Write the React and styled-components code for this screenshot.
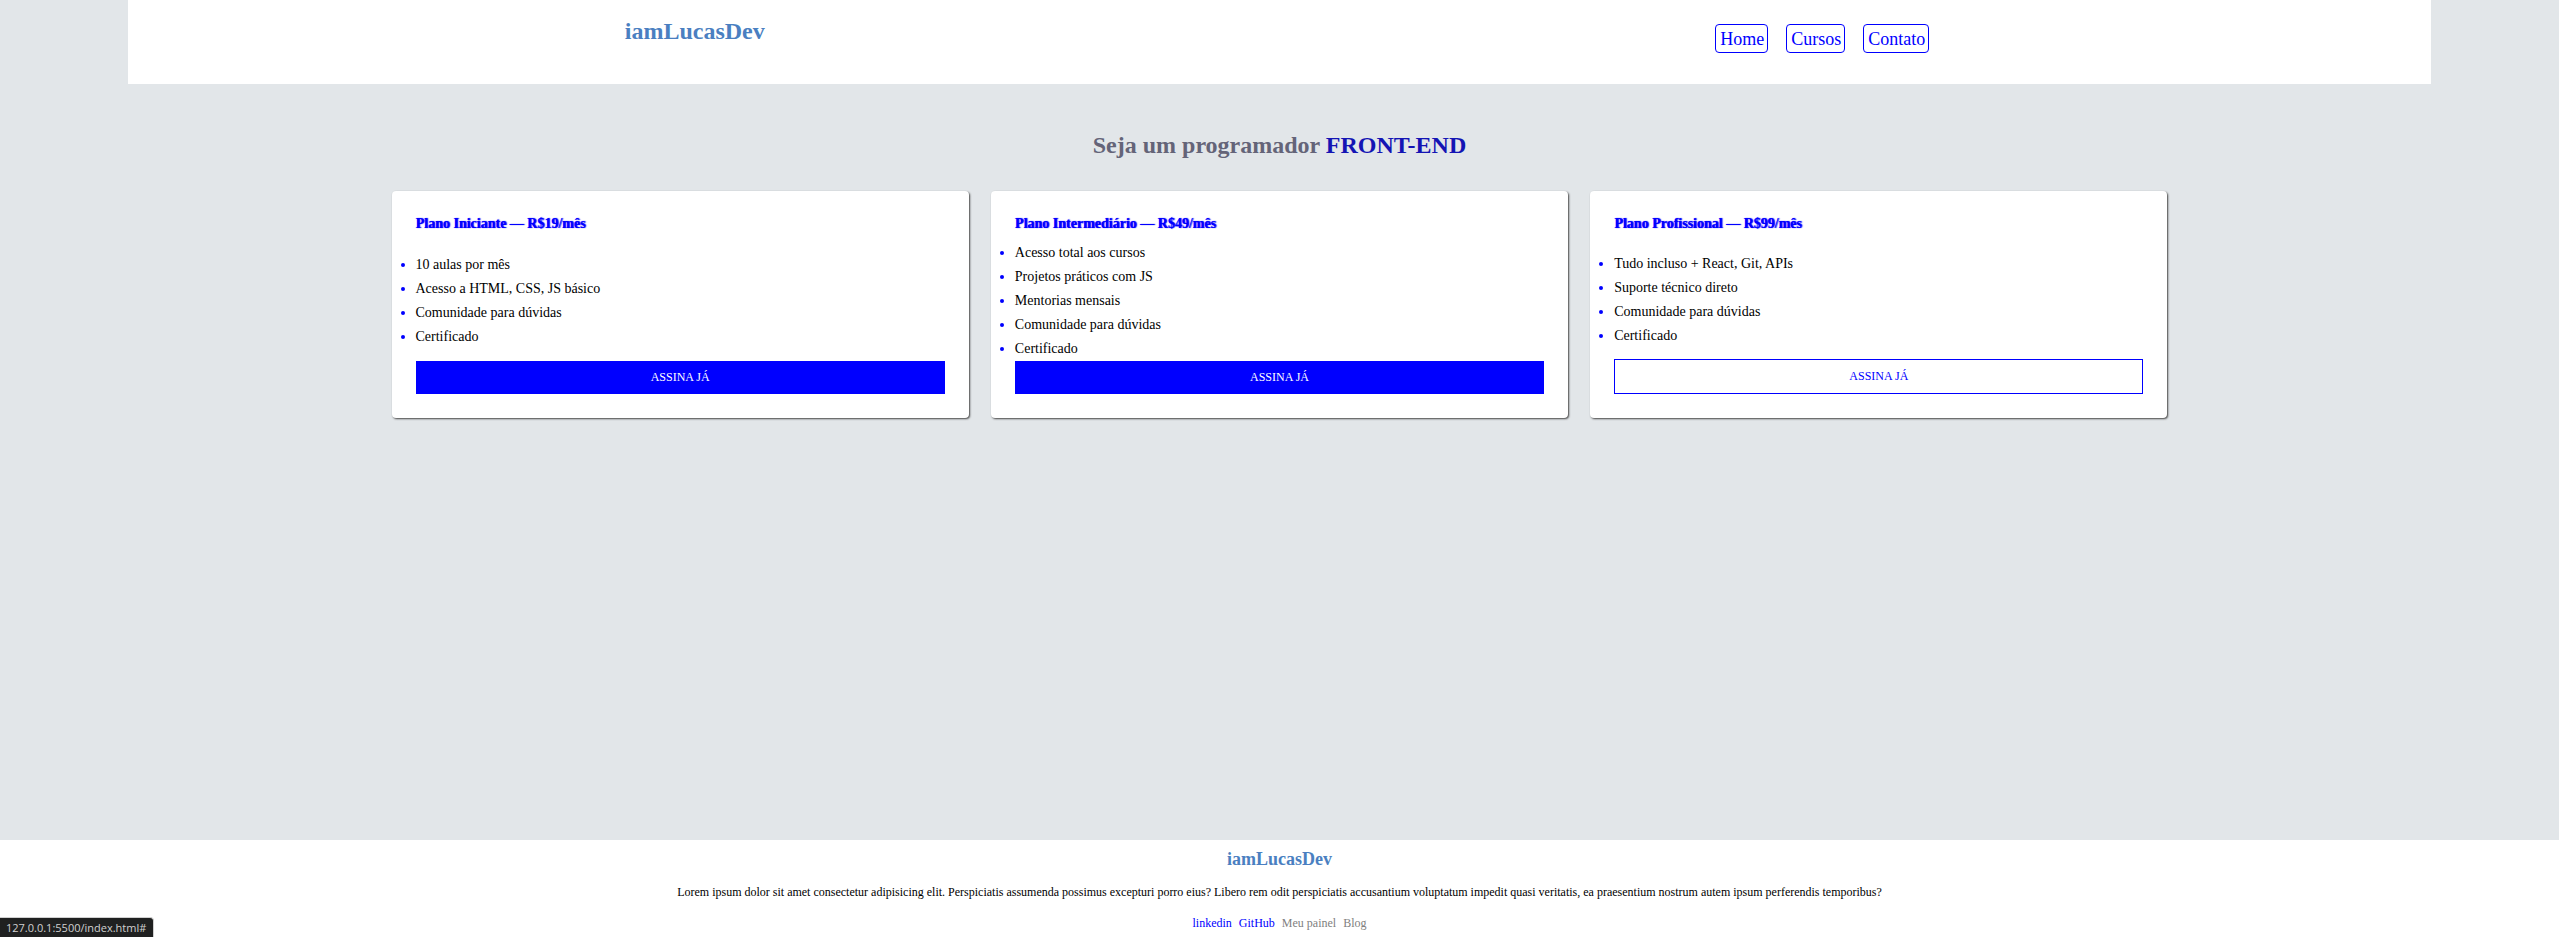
import React from "react";
import styled, { createGlobalStyle } from "styled-components";

const GlobalStyle = createGlobalStyle`
  *, *::before, *::after {
    box-sizing: border-box;
    margin: 0;
    padding: 0;
  }
  body {
    background: #e2e6e9;
    color: #000;
    font-family: "Liberation Serif", "Times New Roman", serif;
  }
`;

const Page = styled.div`
  min-height: 100vh;
  display: flex;
  flex-direction: column;
`;

const Header = styled.header`
  width: 90%;
  min-height: 84px;
  margin: 0 auto;
  padding: 16px 24px;
  display: flex;
  justify-content: space-around;
  align-items: flex-start;
  background: #fff;
`;

const Logo = styled.h1`
  font-size: 24px;
  line-height: 30px;
  color: #4a7fc1;
`;

const Nav = styled.nav`
  display: flex;
  gap: 18px;
  padding: 8px 5px 0;
`;

const NavLink = styled.a`
  padding: 4px 3px 2px 4px;
  border: 1px solid #00f;
  border-radius: 4px;
  font-size: 18px;
  line-height: 21px;
  color: #00f;
  text-decoration: none;
`;

const Main = styled.main`
  flex: 1;
  display: flex;
  flex-direction: column;
  align-items: center;
  gap: 32px;
  padding: 48px 24px;
`;

const Headline = styled.h2`
  font-size: 24px;
  line-height: 27px;
  color: #646478;
`;

const Highlight = styled.span`
  color: #1414b4;
`;

const Plans = styled.section`
  width: 100%;
  max-width: 1776px;
  display: grid;
  grid-template-columns: repeat(3, 1fr);
  gap: 22px;
`;

const Card = styled.article`
  display: flex;
  flex-direction: column;
  justify-content: space-between;
  padding: 24px;
  border-radius: 4px;
  background: #fff;
  box-shadow: 1px 1px 2px #444;
`;

const CardTitle = styled.h3`
  margin-bottom: 6px;
  font-size: 14px;
  line-height: 18px;
  color: #00f;
  text-shadow: 1px 0 1px #00f;
`;

const Features = styled.ul`
  padding-top: 2px;
  font-size: 14px;
  line-height: 24px;
`;

const Feature = styled.li`
  &::marker {
    color: #00f;
  }
`;

const Subscribe = styled.a`
  padding: 10px;
  border: ${(p) => (p.$outlined ? "1px solid #00f" : "0")};
  background: ${(p) => (p.$outlined ? "#fff" : "#00f")};
  color: ${(p) => (p.$outlined ? "#00f" : "#fff")};
  font-size: 12px;
  line-height: 13px;
  text-align: center;
  text-decoration: none;
`;

const Footer = styled.footer`
  display: flex;
  flex-direction: column;
  align-items: center;
  gap: 15px;
  padding: 9px 24px 6px;
  background: #fff;
  font-size: 12px;
  line-height: 16px;
`;

const FooterLogo = styled.h2`
  font-size: 18px;
  line-height: 20px;
  color: #4a7fc1;
`;

const FooterLinks = styled.nav`
  display: flex;
  gap: 7px;
`;

const FooterLink = styled.a`
  color: ${(p) => (p.$muted ? "#808080" : "#00f")};
  text-decoration: none;
`;

const StatusBar = styled.div`
  position: fixed;
  left: 0;
  bottom: 0;
  padding: 2px 7px 1px 6px;
  border: 1px solid #d0d0d0;
  border-width: 1px 1px 0 0;
  border-radius: 0 4px 0 0;
  background: #1f2020;
  color: #d0d0d0;
  font-family: "Open Sans", "Noto Sans", sans-serif;
  font-size: 11px;
  line-height: 16px;
`;

const plans = [
  {
    title: "Plano Iniciante — R$19/mês",
    features: [
      "10 aulas por mês",
      "Acesso a HTML, CSS, JS básico",
      "Comunidade para dúvidas",
      "Certificado",
    ],
  },
  {
    title: "Plano Intermediário — R$49/mês",
    features: [
      "Acesso total aos cursos",
      "Projetos práticos com JS",
      "Mentorias mensais",
      "Comunidade para dúvidas",
      "Certificado",
    ],
  },
  {
    title: "Plano Profissional — R$99/mês",
    outlined: true,
    features: [
      "Tudo incluso + React, Git, APIs",
      "Suporte técnico direto",
      "Comunidade para dúvidas",
      "Certificado",
    ],
  },
];

const footerLinks = [
  { label: "linkedin" },
  { label: "GitHub" },
  { label: "Meu painel", muted: true },
  { label: "Blog", muted: true },
];

export default function App() {
  return (
    <Page>
      <GlobalStyle />
      <Header>
        <Logo>iamLucasDev</Logo>
        <Nav>
          {["Home", "Cursos", "Contato"].map((label) => (
            <NavLink key={label} href="#">
              {label}
            </NavLink>
          ))}
        </Nav>
      </Header>
      <Main>
        <Headline>
          Seja um programador <Highlight>FRONT-END</Highlight>
        </Headline>
        <Plans>
          {plans.map((plan) => (
            <Card key={plan.title}>
              <CardTitle>{plan.title}</CardTitle>
              <Features>
                {plan.features.map((feature) => (
                  <Feature key={feature}>{feature}</Feature>
                ))}
              </Features>
              <Subscribe href="#" $outlined={plan.outlined}>
                ASSINA JÁ
              </Subscribe>
            </Card>
          ))}
        </Plans>
      </Main>
      <Footer>
        <FooterLogo>iamLucasDev</FooterLogo>
        <p>
          Lorem ipsum dolor sit amet consectetur adipisicing elit. Perspiciatis
          assumenda possimus excepturi porro eius? Libero rem odit perspiciatis
          accusantium voluptatum impedit quasi veritatis, ea praesentium nostrum
          autem ipsum perferendis temporibus?
        </p>
        <FooterLinks>
          {footerLinks.map(({ label, muted }) => (
            <FooterLink key={label} href="#" $muted={muted}>
              {label}
            </FooterLink>
          ))}
        </FooterLinks>
      </Footer>
      <StatusBar>127.0.0.1:5500/index.html#</StatusBar>
    </Page>
  );
}
